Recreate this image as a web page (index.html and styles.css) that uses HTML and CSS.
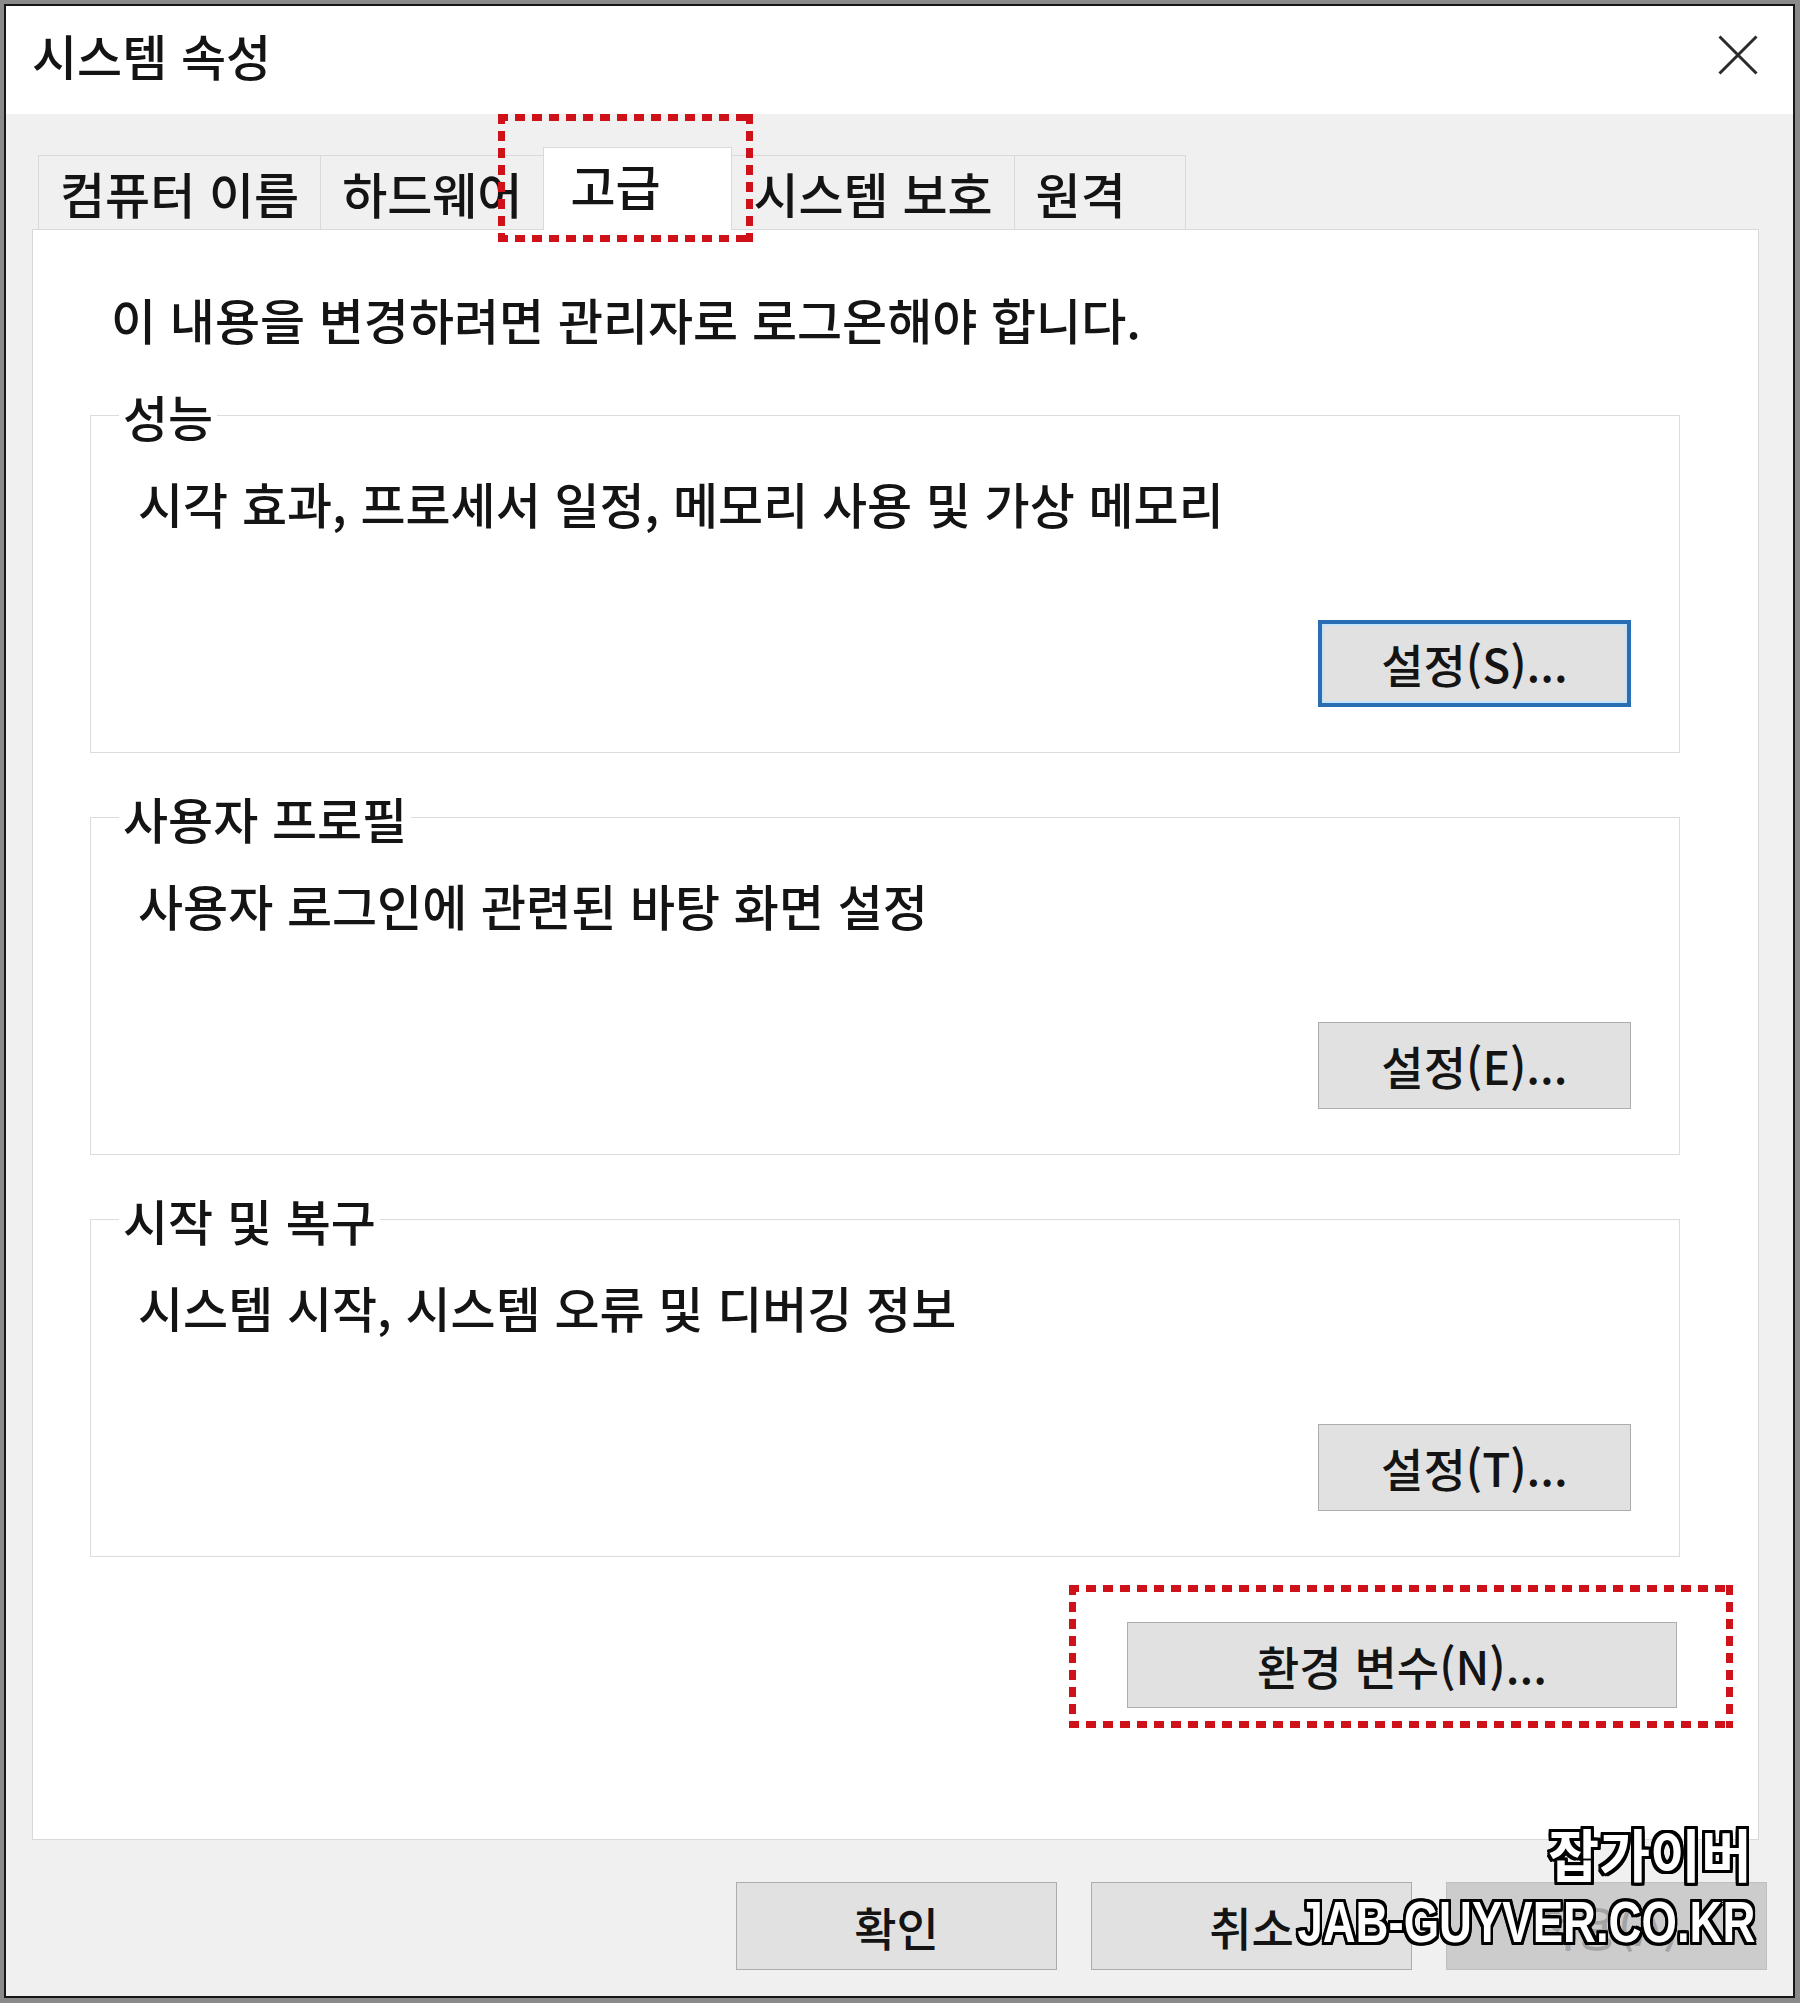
FILE: index.html
```html
<!DOCTYPE html>
<html lang="ko">

<head>
    <meta charset="UTF-8">
    <meta name="viewport" content="width=device-width, initial-scale=1.0">
    <title>시스템 속성</title>
    <link rel="stylesheet" href="styles.css">
</head>

<body>
    <div class="window">
        <!-- Title bar -->
        <div class="titlebar">
            <span class="title">시스템 속성</span>
            <button class="close" aria-label="닫기">
                <svg viewBox="0 0 40 40" width="40" height="40">
                    <path d="M1.5 1.5 L38.5 38.5 M38.5 1.5 L1.5 38.5" stroke="#2b2b2b" stroke-width="3" fill="none" />
                </svg>
            </button>
        </div>

        <div class="dialog-body">
            <!-- Tabs -->
            <ul class="tabs">
                <li class="tab">컴퓨터 이름</li>
                <li class="tab">하드웨어</li>
                <li class="tab active">고급<span class="mark mark-tab"></span></li>
                <li class="tab">시스템 보호</li>
                <li class="tab">원격</li>
            </ul>

            <!-- Tab page -->
            <div class="tab-page">
                <p class="notice">이 내용을 변경하려면 관리자로 로그온해야 합니다.</p>

                <fieldset class="group">
                    <legend>성능</legend>
                    <p class="group-desc">시각 효과, 프로세서 일정, 메모리 사용 및 가상 메모리</p>
                    <div class="group-actions">
                        <button class="btn btn-settings focused">설정(S)...</button>
                    </div>
                </fieldset>

                <fieldset class="group">
                    <legend>사용자 프로필</legend>
                    <p class="group-desc">사용자 로그인에 관련된 바탕 화면 설정</p>
                    <div class="group-actions">
                        <button class="btn btn-settings">설정(E)...</button>
                    </div>
                </fieldset>

                <fieldset class="group">
                    <legend>시작 및 복구</legend>
                    <p class="group-desc">시스템 시작, 시스템 오류 및 디버깅 정보</p>
                    <div class="group-actions">
                        <button class="btn btn-settings">설정(T)...</button>
                    </div>
                </fieldset>

                <div class="env-row">
                    <div class="env-wrap">
                        <button class="btn btn-env">환경 변수(N)...</button>
                        <span class="mark mark-env"></span>
                    </div>
                </div>
            </div>

            <!-- OK / Cancel / Apply -->
            <div class="dialog-buttons">
                <button class="btn btn-dialog">확인</button>
                <button class="btn btn-dialog">취소</button>
                <button class="btn btn-dialog" disabled>적용(A)</button>
            </div>
        </div>

        <!-- Watermark -->
        <div class="watermark">
            <span class="wm-ko">잡가이버</span>
            <span class="wm-en">JAB-GUYVER.CO.KR</span>
        </div>
    </div>
</body>

</html>
```

FILE: styles.css
```css
* {
    box-sizing: border-box;
    margin: 0;
    padding: 0;
}

body {
    background-color: #8a8a8a;
    padding: 4px;
    font-family: "Noto Sans CJK KR", "Malgun Gothic", sans-serif;
    font-size: 49px;
    font-weight: 500;
    line-height: 55px;
    color: #141414;
}

.window {
    position: relative;
    width: 1791px;
    height: 1994px;
    border: 2px solid #161616;
    background-color: #f0f0f0;
    display: flex;
    flex-direction: column;
}

/* Title bar */
.titlebar {
    height: 108px;
    flex-shrink: 0;
    background-color: #fff;
    display: flex;
    align-items: center;
    justify-content: space-between;
    padding: 0 35px 11px 26px;
}

.close {
    border: none;
    background: none;
    width: 40px;
    height: 40px;
}

.close svg {
    display: block;
}

/* Dialog body */
.dialog-body {
    flex: 1;
    display: flex;
    flex-direction: column;
    padding: 33px 26px 26px 26px;
}

.tabs {
    list-style: none;
    display: flex;
    align-items: flex-end;
    margin-left: 6px;
}

.tab {
    min-width: 172px;
    padding: 9px 21px;
    border: 1px solid #d9d9d9;
    border-bottom: none;
    margin-right: -1px;
    background-color: #f0f0f0;
    white-space: nowrap;
}

.tab.active {
    position: relative;
    z-index: 1;
    min-width: 189px;
    padding: 9px 20px 18px 26px;
    margin-bottom: -1px;
    background-color: #fff;
}

.tab-page {
    height: 1611px;
    margin-right: 8px;
    background-color: #fff;
    border: 1px solid #d9d9d9;
    padding: 0 78px 0 57px;
}

.notice {
    margin-top: 61px;
    padding-left: 21px;
}

/* Group boxes */
.group {
    margin-top: 37px;
    border: 1px solid #dcdcdc;
    padding: 0 0 45px 0;
    min-inline-size: 0;
}

.notice + .group {
    margin-top: 42px;
}

.group legend {
    margin-left: 28px;
    padding: 0 4px;
}

.group-desc {
    margin: 32px 0 0 47px;
}

.group-actions {
    display: flex;
    justify-content: flex-end;
    padding-right: 48px;
    margin-top: 90px;
}

/* Buttons */
.btn {
    font: inherit;
    font-size: 46px;
    color: inherit;
    background-color: #e1e1e1;
    border: 1px solid #adadad;
    display: flex;
    align-items: center;
    justify-content: center;
}

.btn-settings {
    width: 313px;
    height: 87px;
}

.btn.focused {
    border: 4px solid #2a6db3;
    box-shadow: inset 0 0 0 2px #c4e3f8;
}

.env-row {
    display: flex;
    justify-content: flex-end;
    padding-right: 3px;
    margin-top: 65px;
}

.env-wrap {
    position: relative;
}

.btn-env {
    width: 550px;
    height: 86px;
}

.dialog-buttons {
    display: flex;
    justify-content: flex-end;
    gap: 34px;
    margin-top: 42px;
}

.btn-dialog {
    width: 321px;
    height: 88px;
}

.btn-dialog:disabled {
    background-color: #cccccc;
    border-color: #bfbfbf;
    color: #a3a3a3;
}

/* Red dotted annotation boxes */
.mark {
    position: absolute;
    pointer-events: none;
    z-index: 2;
    background:
        repeating-linear-gradient(90deg, #cf1119 0 10px, transparent 10px 17px) top left / 100% 7px no-repeat,
        repeating-linear-gradient(90deg, #cf1119 0 10px, transparent 10px 17px) bottom left / 100% 7px no-repeat,
        repeating-linear-gradient(180deg, #cf1119 0 10px, transparent 10px 17px) top left / 7px 100% no-repeat,
        repeating-linear-gradient(180deg, #cf1119 0 10px, transparent 10px 17px) top right / 7px 100% no-repeat;
}

.mark-tab {
    left: -46px;
    right: -22px;
    top: -34px;
    bottom: -12px;
}

.mark-env {
    left: -58px;
    right: -56px;
    top: -37px;
    bottom: -20px;
}

/* Watermark */
.watermark {
    position: absolute;
    right: 38px;
    top: 1816px;
    display: flex;
    flex-direction: column;
    align-items: flex-end;
    pointer-events: none;
    z-index: 3;
    color: #fff;
    font-weight: 700;
    text-shadow:
        -3px -3px 0 #000, 0 -3px 0 #000, 3px -3px 0 #000, 3px 0 0 #000,
        3px 3px 0 #000, 0 3px 0 #000, -3px 3px 0 #000, -3px 0 0 #000,
        -2px -3px 0 #000, 2px -3px 0 #000, -2px 3px 0 #000, 2px 3px 0 #000,
        -3px -2px 0 #000, 3px -2px 0 #000, -3px 2px 0 #000, 3px 2px 0 #000;
}

.wm-ko {
    font-size: 57px;
    line-height: 60px;
    margin-right: 3px;
    transform: scaleX(0.97);
    transform-origin: right;
}

.wm-en {
    font-family: "Liberation Sans", Arial, sans-serif;
    font-size: 58px;
    line-height: 60px;
    margin-top: 10px;
    transform: scaleX(0.785);
    transform-origin: right;
}
```
